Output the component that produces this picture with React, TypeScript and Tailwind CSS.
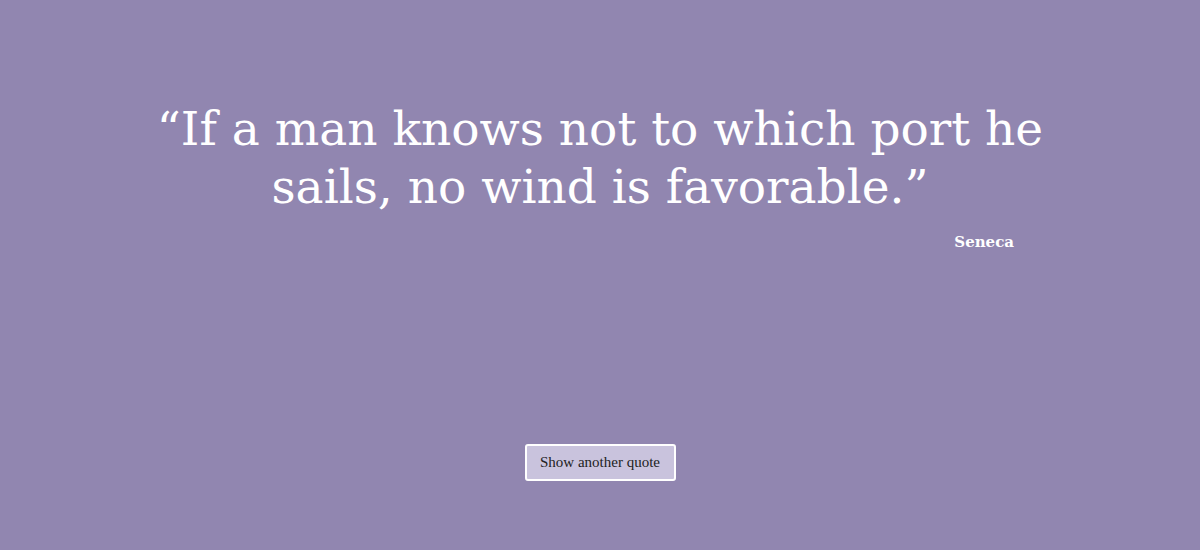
export default function App() {
  return (
    <div className="w-[1200px] h-[550px] bg-[#9186b0] flex flex-col items-center" style={{ fontFamily: '"DejaVu Serif", serif' }}>
      <div className="w-[900px] mt-[100px] flex flex-col">
        <p className="text-white text-[47px] leading-[58px] text-center">
          “If a man knows not to which port he<br />sails, no wind is favorable.”
        </p>
        <p className="text-white text-[15px] font-semibold text-right pr-[36px] mt-[15px]">Seneca</p>
      </div>
      <button
        className="mt-[190px] w-[151px] h-[37px] bg-[#c9c3dd] border-2 border-white rounded-[3px] text-[15px] text-[#222]"
        style={{ fontFamily: '"Liberation Serif", serif' }}
      >
        Show another quote
      </button>
    </div>
  );
}
